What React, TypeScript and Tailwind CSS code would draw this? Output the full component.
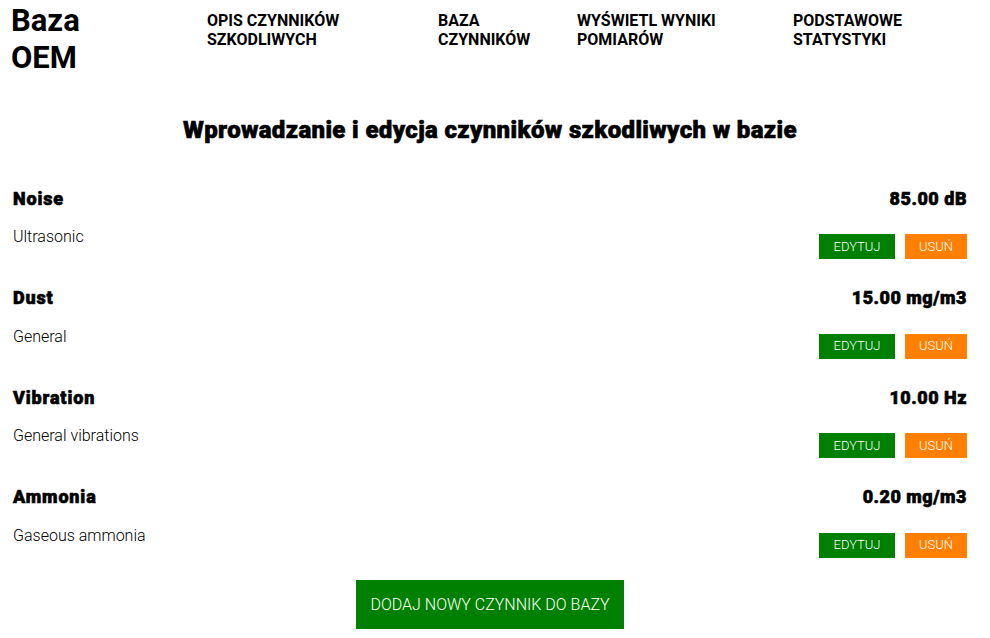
import React from "react";

const items = [
  { name: "Noise", sub: "Ultrasonic", value: "85.00 dB" },
  { name: "Dust", sub: "General", value: "15.00 mg/m3" },
  { name: "Vibration", sub: "General vibrations", value: "10.00 Hz" },
  { name: "Ammonia", sub: "Gaseous ammonia", value: "0.20 mg/m3" },
];

export default function App() {
  return (
    <div className="w-[990px] h-[638px] bg-white text-black overflow-hidden" style={{ fontFamily: "Roboto, 'Liberation Sans', sans-serif" }}>
      <div className="w-[980px]">
        <header className="flex items-start pl-[11px] pt-[2px]">
          <div className="w-[196px] text-[31px] font-bold leading-[37px]">Baza<br />OEM</div>
          <nav className="flex text-[16px] font-bold leading-[19px] uppercase pt-[9px]">
            <a className="w-[231px]">Opis czynników<br />szkodliwych</a>
            <a className="w-[139px]">Baza<br />czynników</a>
            <a className="w-[216px]">Wyświetl wyniki<br />pomiarów</a>
            <a>Podstawowe<br />statystyki</a>
          </nav>
        </header>
        <h1 className="text-center text-[24px] font-black mt-[40px] leading-[28px] tracking-[0.35px] [-webkit-text-stroke:0.6px_black]">Wprowadzanie i edycja czynników szkodliwych w bazie</h1>
        <div className="pl-[13px] pr-[13px] mt-[42px]">
          {items.map((it) => (
            <div key={it.name} className="h-[99.5px]">
              <div className="flex justify-between items-center h-[24px] text-[18px] font-black [-webkit-text-stroke:0.6px_black]">
                <span className="tracking-[0.85px]">{it.name}</span>
                <span className="tracking-[0.5px]">{it.value}</span>
              </div>
              <div className="flex justify-between items-start mt-[17px]">
                <span className="text-[16px] font-light leading-[20px]">{it.sub}</span>
                <div className="flex gap-[10px] mt-[7px]">
                  <button className="w-[76px] h-[25px] bg-[#008000] text-white text-[13px] font-light">EDYTUJ</button>
                  <button className="w-[62px] h-[25px] bg-[#ff8000] text-white text-[13px] font-light">USUŃ</button>
                </div>
              </div>
            </div>
          ))}
        </div>
        <div className="flex justify-center mt-[-4px]">
          <button className="w-[268px] h-[49px] bg-[#008000] text-white text-[16px] font-light">DODAJ NOWY CZYNNIK DO BAZY</button>
        </div>
      </div>
    </div>
  );
}
